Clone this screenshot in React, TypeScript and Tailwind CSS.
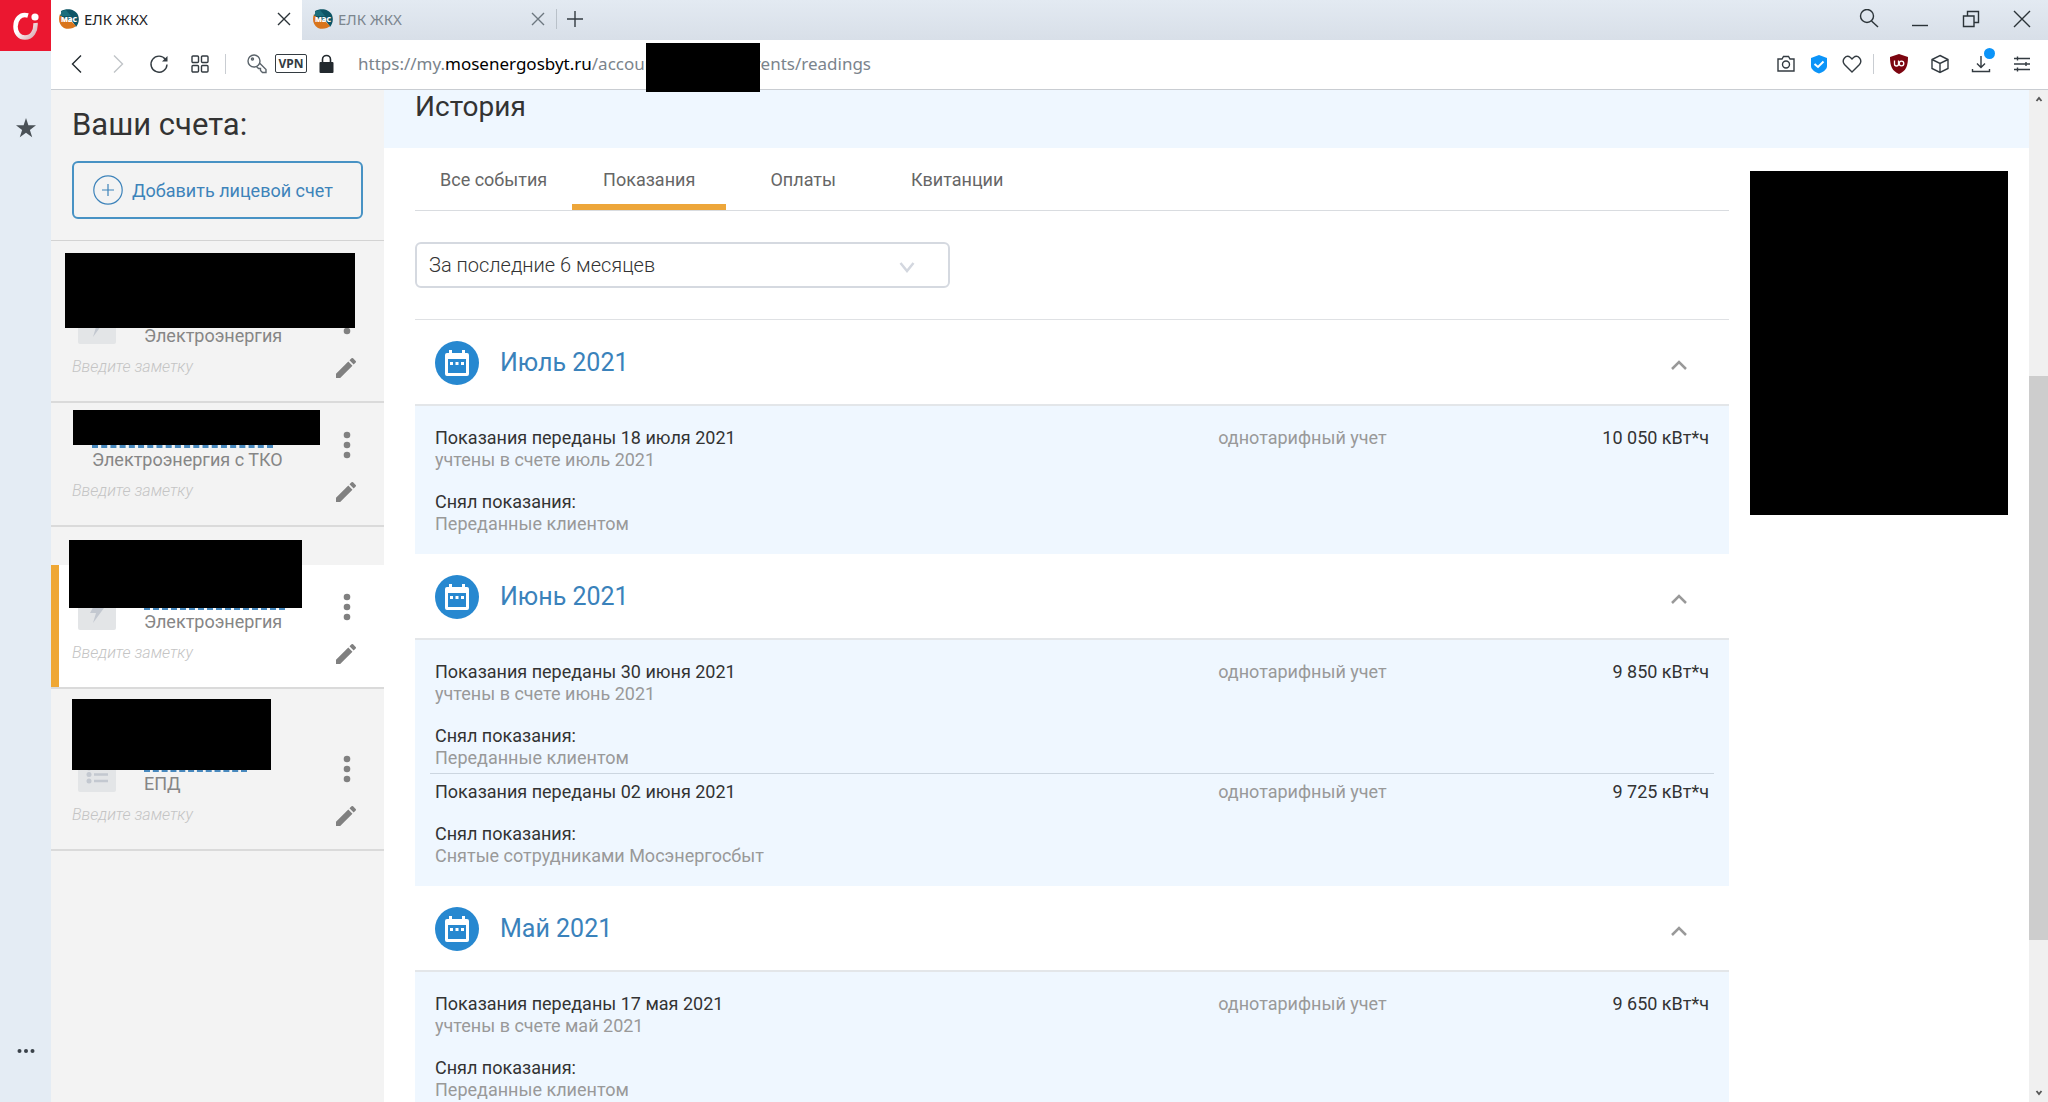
import type { ReactNode } from "react";

interface Account {
  type: string;
  heading: boolean;
  active: boolean;
  icon: "bolt" | "list" | null;
  nameClass: string;
  maskClass: string;
}

interface Reading {
  date: string;
  bill: string | null;
  source: string;
  value: string;
}

interface Month {
  title: string;
  readings: Reading[];
}

const accounts: Account[] = [
  {
    type: "Электроэнергия",
    heading: true,
    active: false,
    icon: "bolt",
    nameClass: "w-[141px]",
    maskClass: "left-[14px] -top-[26px] w-[290px] h-[75px]",
  },
  {
    type: "Электроэнергия с ТКО",
    heading: false,
    active: false,
    icon: null,
    nameClass: "w-[181px]",
    maskClass: "left-[22px] top-[7px] w-[247px] h-[35px]",
  },
  {
    type: "Электроэнергия",
    heading: true,
    active: true,
    icon: "bolt",
    nameClass: "w-[141px]",
    maskClass: "left-[18px] -top-[25px] w-[233px] h-[68px]",
  },
  {
    type: "ЕПД",
    heading: true,
    active: false,
    icon: "list",
    nameClass: "w-[103px]",
    maskClass: "left-[21px] -top-[28px] w-[199px] h-[71px]",
  },
];

const months: Month[] = [
  {
    title: "Июль 2021",
    readings: [
      {
        date: "18 июля 2021",
        bill: "июль 2021",
        source: "Переданные клиентом",
        value: "10 050",
      },
    ],
  },
  {
    title: "Июнь 2021",
    readings: [
      {
        date: "30 июня 2021",
        bill: "июнь 2021",
        source: "Переданные клиентом",
        value: "9 850",
      },
      {
        date: "02 июня 2021",
        bill: null,
        source: "Снятые сотрудниками Мосэнергосбыт",
        value: "9 725",
      },
    ],
  },
  {
    title: "Май 2021",
    readings: [
      {
        date: "17 мая 2021",
        bill: "май 2021",
        source: "Переданные клиентом",
        value: "9 650",
      },
    ],
  },
];

const tabs = ["Все события", "Показания", "Оплаты", "Квитанции"];

interface StrokeIconProps {
  className?: string;
  children: ReactNode;
}

// Outline icon on a 20x20 grid
function StrokeIcon({ className = "", children }: StrokeIconProps) {
  return (
    <svg
      viewBox="0 0 20 20"
      fill="none"
      stroke="currentColor"
      strokeWidth="1.4"
      className={`size-5 shrink-0 ${className}`}
      aria-hidden="true"
    >
      {children}
    </svg>
  );
}

function Favicon() {
  return (
    <svg viewBox="0 0 20 20" className="size-5 shrink-0" aria-hidden="true">
      <path d="M2 2 C8 -1 16 0 19 6 C21 11 19 16 17 18 L13 12 L3 9 Z" fill="#0d5566" />
      <path d="M1 5 C-1 10 0 16 5 19 C10 21 15 19 17 17 L13 13 L5 10 Z" fill="#d9751c" />
      <path d="M1 7 L3 2 L7 1 L12 7 Z" fill="#1b6e7d" />
      <text
        x="10"
        y="13"
        textAnchor="middle"
        fontSize="7"
        fontWeight="800"
        fill="#fff"
        className="font-['Open_Sans',sans-serif]"
      >
        МЭС
      </text>
    </svg>
  );
}

function CloseIcon({ className }: { className: string }) {
  return (
    <StrokeIcon className={className}>
      <path d="M4 4 L16 16 M16 4 L4 16" />
    </StrokeIcon>
  );
}

function TabStrip() {
  return (
    <div className="flex h-10 bg-linear-to-b from-[#e3eaf2] to-[#d8dfe8] text-[15px]">
      <div className="flex w-[251px] items-center gap-[5px] bg-white px-2 pb-0.5 text-[#1e2327]">
        <Favicon />
        <span className="flex-1">ЕЛК ЖКХ</span>
        <button type="button" aria-label="Закрыть вкладку">
          <CloseIcon className="text-[#2b3338]" />
        </button>
      </div>
      <div className="flex w-[254px] items-center gap-[5px] pr-2 pb-0.5 pl-[11px] text-[#7c868f]">
        <Favicon />
        <span className="flex-1">ЕЛК ЖКХ</span>
        <button type="button" aria-label="Закрыть вкладку">
          <CloseIcon className="text-[#6d777f]" />
        </button>
      </div>
      <div className="flex items-center gap-2 pb-0.5">
        <span className="h-5 w-px bg-[#b9c1c9]" />
        <button type="button" aria-label="Новая вкладка">
          <StrokeIcon className="text-[#333b41]">
            <path d="M10 2 V18 M2 10 H18" />
          </StrokeIcon>
        </button>
      </div>
      <div className="ml-auto flex items-center gap-[31px] pr-4 pb-0.5 text-[#2b3338]">
        <button type="button" aria-label="Поиск">
          <StrokeIcon>
            <circle cx="8" cy="7" r="6.5" />
            <path d="M12.5 12 L19 18" />
          </StrokeIcon>
        </button>
        <button type="button" aria-label="Свернуть">
          <StrokeIcon>
            <path d="M2 16.5 H18" />
          </StrokeIcon>
        </button>
        <button type="button" aria-label="Развернуть">
          <StrokeIcon>
            <path d="M2.5 7 H13 V17.5 H2.5 Z M6.5 7 V2.5 H17.5 V13.5 H13" />
          </StrokeIcon>
        </button>
        <button type="button" aria-label="Закрыть окно">
          <StrokeIcon>
            <path d="M2 2 L18 18 M18 2 L2 18" />
          </StrokeIcon>
        </button>
      </div>
    </div>
  );
}

function AddressBar() {
  return (
    <div className="flex h-[50px] items-center border-b border-[#c9cdd2] bg-white px-4 pb-0.5 text-[#333b41]">
      <div className="flex w-[158px] items-center gap-[21px]">
        <button type="button" aria-label="Назад">
          <StrokeIcon className="text-[#22292e]">
            <path d="M14 1.5 L5.5 10 L14 18.5" />
          </StrokeIcon>
        </button>
        <button type="button" aria-label="Вперёд">
          <StrokeIcon className="text-[#c0c4c8]">
            <path d="M6 1.5 L14.5 10 L6 18.5" />
          </StrokeIcon>
        </button>
        <button type="button" aria-label="Обновить">
          <StrokeIcon>
            <path d="M16.5 5.5 A8 8 0 1 0 18 10.5" />
            <path d="M18.5 2 V7.5 H13 Z" fill="currentColor" stroke="none" />
          </StrokeIcon>
        </button>
        <button type="button" aria-label="Экспресс-панель">
          <StrokeIcon>
            <rect x="2" y="2" width="6.5" height="6.5" rx="1" />
            <rect x="11.5" y="2" width="6.5" height="6.5" rx="1" />
            <rect x="2" y="11.5" width="6.5" height="6.5" rx="1" />
            <rect x="11.5" y="11.5" width="6.5" height="6.5" rx="1" />
          </StrokeIcon>
        </button>
      </div>
      <span className="h-5 w-px bg-[#c9cdd2]" />
      <div className="flex w-[132px] items-center gap-2 pl-[21px]">
        <StrokeIcon className="text-[#5b646b]">
          <circle cx="7" cy="7" r="6" />
          <circle cx="5.5" cy="5" r="1" />
          <path d="M12.5 9 L19 15.5 V18.5 H15.5 L13.5 16.5 V14.5 H11.5 L9.5 12.5" />
        </StrokeIcon>
        <button
          type="button"
          className="flex h-[19px] w-8 items-center justify-center rounded-xs border border-[#333b41] text-[12px] font-bold"
        >
          VPN
        </button>
        <svg viewBox="0 0 20 20" className="ml-0.5 size-5 shrink-0" aria-hidden="true">
          <rect x="2.5" y="8" width="14" height="11" rx="1" fill="#22292e" />
          <path
            d="M5.5 9 V5.5 A4 4 0 0 1 13.5 5.5 V9"
            fill="none"
            stroke="#22292e"
            strokeWidth="1.6"
          />
        </svg>
      </div>
      <a
        href="#readings"
        className="flex h-[47px] items-center text-[17px] whitespace-nowrap text-[#7b848c]"
      >
        <span className="w-[288px]">
          https://my.<span className="text-black">mosenergosbyt.ru</span>/accoun
        </span>
        <span className="z-10 -mb-[5px] h-[49px] w-[114px] self-end bg-black" />
        <span className="flex w-[111px] justify-end">vents/readings</span>
      </a>
      <div className="ml-auto flex items-center gap-[13px]">
        <button type="button" aria-label="Снимок">
          <StrokeIcon>
            <path d="M2 5 H6 L7.5 2.5 H12.5 L14 5 H18 V17 H2 Z" />
            <circle cx="10" cy="10.5" r="3.5" />
          </StrokeIcon>
        </button>
        <button type="button" aria-label="Защита">
          <svg viewBox="0 0 20 20" className="size-5" aria-hidden="true">
            <path
              d="M10 1 L18 4 V12 C18 16 13 18.5 10 19.5 C7 18.5 2 16 2 12 V4 Z"
              fill="#0c94f8"
            />
            <path d="M5.5 10 L9 13 L14.5 7.5" fill="none" stroke="#fff" strokeWidth="2" />
          </svg>
        </button>
        <button type="button" aria-label="В закладки">
          <StrokeIcon>
            <path d="M10 18 L2.5 10.5 C-1 6 4 0 8.5 3.5 L10 5 L11.5 3.5 C16 0 21 6 17.5 10.5 Z" />
          </StrokeIcon>
        </button>
      </div>
      <span className="mx-[11px] h-5 w-px bg-[#c9cdd2]" />
      <div className="flex items-center gap-[21px] pl-1">
        <button type="button" aria-label="uBlock">
          <svg viewBox="0 0 20 20" className="size-5" aria-hidden="true">
            <path d="M10 0 L19 3 C19 12 17 17 10 20 C3 17 1 12 1 3 Z" fill="#7c0510" />
            <path
              d="M5.5 6.5 V10 A2 2 0 0 0 9.5 10 V6.5"
              fill="none"
              stroke="#fff"
              strokeWidth="1.3"
            />
            <circle cx="12.5" cy="9.5" r="2.3" fill="none" stroke="#fff" strokeWidth="1.3" />
          </svg>
        </button>
        <button type="button" aria-label="Расширения">
          <StrokeIcon>
            <path d="M10 1.5 L18 5.5 V14.5 L10 18.5 L2 14.5 V5.5 Z M2 5.5 L10 9.5 L18 5.5 M10 9.5 V18.5" />
          </StrokeIcon>
        </button>
        <button type="button" aria-label="Загрузки" className="relative">
          <StrokeIcon>
            <path d="M10 2 V13 M6 9.5 L10 13.5 L14 9.5 M1.5 15 V17.5 H18.5 V15" />
          </StrokeIcon>
          <span className="absolute -top-1.5 -right-1 size-[11px] rounded-full bg-[#0c94f8]" />
        </button>
        <button type="button" aria-label="Настройки">
          <StrokeIcon>
            <path d="M2 4.5 H18 M2 10 H18 M2 15.5 H18 M5.5 2.5 V6.5 M14 8 V12 M5.5 13.5 V17.5" />
          </StrokeIcon>
        </button>
      </div>
    </div>
  );
}

function Rail() {
  return (
    <aside className="flex w-[51px] shrink-0 flex-col items-center bg-[#e4ecf4]">
      <button
        type="button"
        aria-label="Меню"
        className="flex h-[51px] w-full items-center justify-center bg-[#eb1730]"
      >
        <svg viewBox="0 0 26 28" className="h-7 w-[26px]" aria-hidden="true">
          <defs>
            <linearGradient id="ring" x1="0" y1="0" x2="1" y2="1">
              <stop offset="0.4" stopColor="#fff" />
              <stop offset="1" stopColor="#d9a8b0" />
            </linearGradient>
          </defs>
          <path
            d="M15 3.5 C7 1 2.5 8 2.5 14.5 C2.5 21 6.5 25.5 12 25.5 C19 25.5 23 19 22.5 11"
            fill="none"
            stroke="url(#ring)"
            strokeWidth="4.5"
          />
          <circle cx="22" cy="5" r="3.6" fill="#fff" />
        </svg>
      </button>
      <button type="button" aria-label="Закладки" className="mt-[67px]">
        <svg viewBox="0 0 20 20" className="size-5" aria-hidden="true">
          <path
            d="M10 0 L12.4 7.3 H20 L13.9 11.9 L16.2 19.3 L10 14.8 L3.8 19.3 L6.1 11.9 L0 7.3 H7.6 Z"
            fill="#4a5157"
          />
        </svg>
      </button>
      <button type="button" aria-label="Ещё" className="mt-auto mb-[41px]">
        <svg viewBox="0 0 20 20" className="size-5" aria-hidden="true">
          <g fill="#3a4249">
            <circle cx="3.5" cy="10" r="2" />
            <circle cx="10" cy="10" r="2" />
            <circle cx="16.5" cy="10" r="2" />
          </g>
        </svg>
      </button>
    </aside>
  );
}

function AccountTile({ icon }: { icon: "bolt" | "list" }) {
  return (
    <span className="mt-[7px] ml-1.5 flex size-[38px] items-center justify-center rounded-xs bg-[#e3e5e7] text-[#c3c8d0]">
      <svg viewBox="0 0 24 24" className="size-6" fill="currentColor" aria-hidden="true">
        {icon === "bolt" ? (
          <path d="M12 1 L5 14 H11 L8 24 L19 9 H13 L16 1 Z" />
        ) : (
          <>
            <circle cx="4" cy="7" r="2.5" />
            <circle cx="4" cy="13.5" r="2.5" />
            <circle cx="4" cy="20" r="2.5" />
            <path d="M9 6 H23 V8.5 H9 Z M9 12.3 H23 V14.8 H9 Z M9 18.7 H23 V21.2 H9 Z" />
          </>
        )}
      </svg>
    </span>
  );
}

function AccountRow({ account }: { account: Account }) {
  return (
    <li>
      {account.heading && <div className="h-[38px]" />}
      <div
        className={`relative h-[124px] border-b-2 border-[#dadada] pt-5 pr-7 pl-[21px] ${
          account.active ? "bg-white" : ""
        }`}
      >
        {account.active && <span className="absolute inset-y-0 left-0 w-2 bg-[#efa734]" />}
        <div className="flex">
          {account.icon && <AccountTile icon={account.icon} />}
          <a
            href="#account"
            className={account.icon ? "ml-7 text-[#868686]" : "ml-5 text-[#868686]"}
          >
            <span
              className={`block h-[25px] border-b-3 border-dashed border-[#4788bd] ${account.nameClass}`}
            />
            <span className="block text-[18px] leading-6">{account.type}</span>
          </a>
          <button type="button" aria-label="Действия" className="mt-2 ml-auto h-7">
            <svg viewBox="0 0 20 28" className="h-7 w-5" fill="#808080" aria-hidden="true">
              <circle cx="11" cy="4" r="3.3" />
              <circle cx="11" cy="14" r="3.3" />
              <circle cx="11" cy="24" r="3.3" />
            </svg>
          </button>
        </div>
        <div className="mt-1 flex items-center">
          <input
            aria-label="Заметка"
            placeholder="Введите заметку"
            className="h-7 min-w-0 flex-1 text-[16px] font-light italic placeholder:text-[#c4c4c4]"
          />
          <button type="button" aria-label="Изменить заметку" className="mt-1">
            <svg viewBox="3 3 18 18" className="size-5" fill="#808080" aria-hidden="true">
              <path d="M3 17.25V21h3.75L17.81 9.94l-3.75-3.75L3 17.25zM20.71 7.04a1 1 0 0 0 0-1.41l-2.34-2.34a1 1 0 0 0-1.41 0l-1.83 1.83 3.75 3.75 1.83-1.83z" />
            </svg>
          </button>
        </div>
        <span className={`absolute bg-black ${account.maskClass}`} />
      </div>
    </li>
  );
}

function Sidebar() {
  return (
    <nav className="w-[333px] shrink-0 bg-[#f3f3f3]">
      <div className="border-b border-[#d3d3d3] px-[21px] pt-[17px] pb-[21px]">
        <h2 className="text-[31px] leading-9 text-[#333]">Ваши счета:</h2>
        <button
          type="button"
          className="mt-[18px] flex h-[58px] w-full items-center gap-[9px] rounded-md border-2 border-[#4792c4] px-[19px] text-[18px] text-[#3d83ba]"
        >
          <svg
            viewBox="0 0 30 30"
            fill="none"
            stroke="currentColor"
            strokeWidth="1.2"
            className="size-[30px]"
            aria-hidden="true"
          >
            <circle cx="15" cy="15" r="14.2" />
            <path d="M15 9 V21 M9 15 H21" />
          </svg>
          Добавить лицевой счет
        </button>
      </div>
      <ul>
        {accounts.map((account, index) => (
          <AccountRow key={index} account={account} />
        ))}
      </ul>
    </nav>
  );
}

function MonthSection({ month }: { month: Month }) {
  return (
    <section>
      <h2>
        <button
          type="button"
          aria-expanded="true"
          className="flex h-[86px] w-full items-center border-b-2 border-[#e3e6e9] pt-px pr-[41px] pl-5 text-[25px] text-[#3a82bb]"
        >
          <svg viewBox="0 0 44 44" className="mr-[21px] size-11" aria-hidden="true">
            <circle cx="22" cy="22" r="22" fill="#2788d0" />
            <path
              d="M14 9 h3 v3 h10 v-3 h3 v3 h2 a2 2 0 0 1 2 2 v19 a2 2 0 0 1 -2 2 h-20 a2 2 0 0 1 -2 -2 v-19 a2 2 0 0 1 2 -2 h2 Z"
              fill="#fff"
            />
            <rect x="13" y="18" width="18" height="14" fill="#2788d0" />
            <path d="M15 21 h3 v3 h-3 Z M20.5 21 h3 v3 h-3 Z M26 21 h3 v3 h-3 Z" fill="#fff" />
          </svg>
          {month.title}
          <svg
            viewBox="0 0 18 18"
            className="mt-1 ml-auto size-[18px]"
            fill="none"
            stroke="#999"
            strokeWidth="2.5"
            aria-hidden="true"
          >
            <path d="M2 13 L9 6 L16 13" />
          </svg>
        </button>
      </h2>
      <div className="bg-[#eff7ff] px-[15px] pt-[21px] pb-[19px]">
        <table className="w-full table-fixed text-[18px] leading-[22px] text-[#333]">
          <tbody>
            {month.readings.map((reading) => (
              <tr
                key={reading.date}
                className="group border-t border-[#ccd6e0] align-top first:border-t-0"
              >
                <td className="w-[61%] px-[5px] pb-1 group-not-first:pt-[7px] group-last:pb-0">
                  <p>Показания переданы {reading.date}</p>
                  {reading.bill && <p className="text-[#999]">учтены в счете {reading.bill}</p>}
                  <p className="mt-5">Снял показания:</p>
                  <p className="text-[#999]">{reading.source}</p>
                </td>
                <td className="px-[5px] text-[#999] group-not-first:pt-[7px]">
                  однотарифный учет
                </td>
                <td className="px-[5px] text-right group-not-first:pt-[7px]">
                  {reading.value} кВт*ч
                </td>
              </tr>
            ))}
          </tbody>
        </table>
      </div>
    </section>
  );
}

function History() {
  return (
    <main className="flex min-w-0 flex-1 flex-col bg-white">
      <div className="h-[58px] shrink-0 bg-[#eff7ff] px-[31px]">
        <h1 className="text-[28px] leading-[34px] text-[#333]">История</h1>
      </div>
      <div className="flex items-start gap-[21px] pr-[21px] pl-[31px]">
        <div className="min-w-0 flex-1">
          <div role="tablist" className="flex h-[63px] border-b border-[#d9dce0]">
            {tabs.map((tab) => (
              <button
                key={tab}
                type="button"
                role="tab"
                aria-selected={tab === "Показания"}
                className="min-w-[154px] border-b-6 border-transparent px-[25px] pt-1.5 text-[18px] text-[#666] aria-selected:border-[#eda63a]"
              >
                {tab}
              </button>
            ))}
          </div>
          <div className="relative my-[31px] w-[535px]">
            <select
              aria-label="Период"
              className="h-[46px] w-full appearance-none rounded-md border-2 border-[#d5d9e0] bg-white px-3 text-[20px] font-light text-[#333]"
            >
              <option>За последние 6 месяцев</option>
            </select>
            <svg
              viewBox="0 0 16 16"
              className="pointer-events-none absolute top-[17px] right-[35px] size-4"
              fill="none"
              stroke="#d3d7df"
              strokeWidth="2.5"
              aria-hidden="true"
            >
              <path d="M1.5 4 L8 12 L14.5 4" />
            </svg>
          </div>
          <div className="border-t border-[#dfe1e4]">
            {months.map((month) => (
              <MonthSection key={month.title} month={month} />
            ))}
          </div>
        </div>
        <div className="mt-[23px] h-[344px] w-[258px] shrink-0 bg-black" />
      </div>
    </main>
  );
}

function Scrollbar() {
  return (
    <div className="flex w-[19px] shrink-0 flex-col items-center bg-[#f0f0f0] py-1">
      <svg viewBox="0 0 10 10" className="size-2.5 shrink-0" aria-hidden="true">
        <path d="M2.5 7 L5 4 L7.5 7" fill="none" stroke="#555" strokeWidth="1.8" />
      </svg>
      <span className="flex-[272]" />
      <span className="w-full flex-[564] bg-[#cdcdcd]" />
      <span className="flex-[148]" />
      <svg viewBox="0 0 10 10" className="size-2.5 shrink-0" aria-hidden="true">
        <path d="M2.5 3 L5 6 L7.5 3" fill="none" stroke="#555" strokeWidth="1.8" />
      </svg>
    </div>
  );
}

export default function App() {
  return (
    <div className="flex h-screen overflow-hidden bg-white font-['Roboto',sans-serif]">
      <Rail />
      <div className="flex min-w-0 flex-1 flex-col">
        <header className="shrink-0 font-['Noto_Sans',sans-serif]">
          <TabStrip />
          <AddressBar />
        </header>
        <div className="flex min-h-0 flex-1 overflow-hidden">
          <Sidebar />
          <History />
          <Scrollbar />
        </div>
      </div>
    </div>
  );
}
